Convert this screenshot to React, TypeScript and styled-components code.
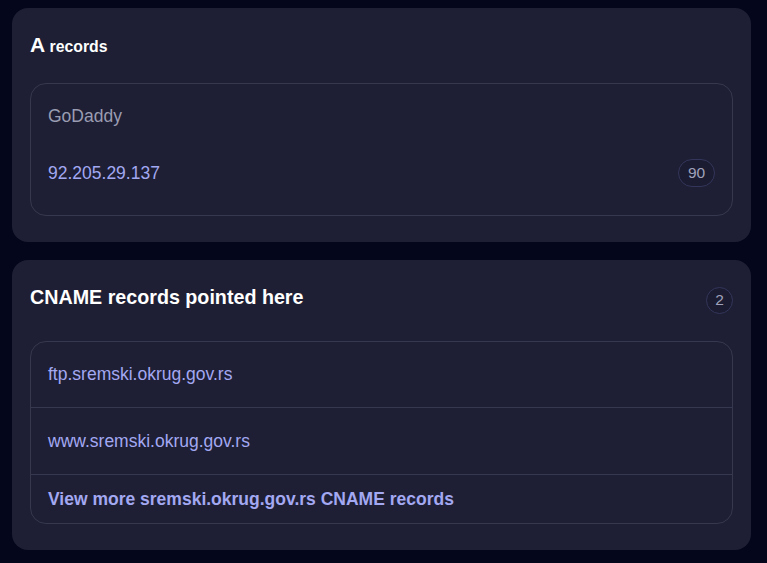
import React from "react";
import styled, { createGlobalStyle } from "styled-components";

const Global = createGlobalStyle`
  html, body { margin: 0; padding: 0; background: #04061c; }
  body { font-family: "Liberation Sans", Arial, sans-serif; }
`;

const Page = styled.div`
  display: flex;
  flex-direction: column;
  gap: 18px;
  padding: 8px 16px 14px 12px;
`;

const Card = styled.section`
  background: #1e1f34;
  border-radius: 16px;
  padding: 18px 18px 26px;
  display: flex;
  flex-direction: column;
`;

const Header = styled.div<{ $h: number }>`
  display: flex;
  align-items: center;
  justify-content: space-between;
  height: ${(p) => p.$h}px;
  margin-bottom: 19px;
`;

const Title = styled.h2<{ $lift?: number }>`
  margin: 0;
  padding-bottom: ${(p) => p.$lift ?? 0}px;
  color: #ffffff;
  font-size: 19.7px;
  font-weight: 700;
  line-height: 1;
`;

const BigA = styled.span`
  font-size: 21px;
`;

const Small = styled.span`
  font-size: 15.8px;
`;

const Badge = styled.span<{ $w: number; $h: number }>`
  display: inline-flex;
  align-items: center;
  justify-content: center;
  box-sizing: border-box;
  min-width: ${(p) => p.$w}px;
  height: ${(p) => p.$h}px;
  border-radius: 999px;
  border: 1px solid #33365a;
  background: #1b1c31;
  color: #a0a2bb;
  font-size: 15.5px;
`;

const Box = styled.div`
  border: 1px solid #36384f;
  border-radius: 16px;
`;

const RecordBody = styled.div`
  display: flex;
  flex-direction: column;
  gap: 28px;
  padding: 17px 17px 28px;
`;

const Provider = styled.div`
  color: #9a9cb2;
  font-size: 17.5px;
  line-height: 30px;
`;

const ValueRow = styled.div`
  display: flex;
  align-items: center;
  justify-content: space-between;
  height: 28px;
`;

const LinkText = styled.a<{ $bold?: boolean }>`
  color: #a3a8f2;
  font-size: 17.5px;
  font-weight: ${(p) => (p.$bold ? 700 : 400)};
  text-decoration: none;
`;

const ListRow = styled.div<{ $h: number }>`
  display: flex;
  align-items: center;
  height: ${(p) => p.$h}px;
  padding: 0 17px;
  & + & { border-top: 1px solid #36384f; }
`;

export default function App() {
  return (
    <>
      <Global />
      <Page>
        <Card>
          <Header $h={38}>
            <Title>
              <BigA>A</BigA><Small> records</Small>
            </Title>
          </Header>
          <Box>
            <RecordBody>
              <Provider>GoDaddy</Provider>
              <ValueRow>
                <LinkText href="#">92.205.29.137</LinkText>
                <Badge $w={37} $h={28}>90</Badge>
              </ValueRow>
            </RecordBody>
          </Box>
        </Card>
        <Card>
          <Header $h={44}>
            <Title $lift={5}>CNAME records pointed here</Title>
            <Badge $w={27} $h={27}>2</Badge>
          </Header>
          <Box>
            <ListRow $h={65}>
              <LinkText href="#">ftp.sremski.okrug.gov.rs</LinkText>
            </ListRow>
            <ListRow $h={66}>
              <LinkText href="#">www.sremski.okrug.gov.rs</LinkText>
            </ListRow>
            <ListRow $h={48}>
              <LinkText href="#" $bold>View more sremski.okrug.gov.rs CNAME records</LinkText>
            </ListRow>
          </Box>
        </Card>
      </Page>
    </>
  );
}
